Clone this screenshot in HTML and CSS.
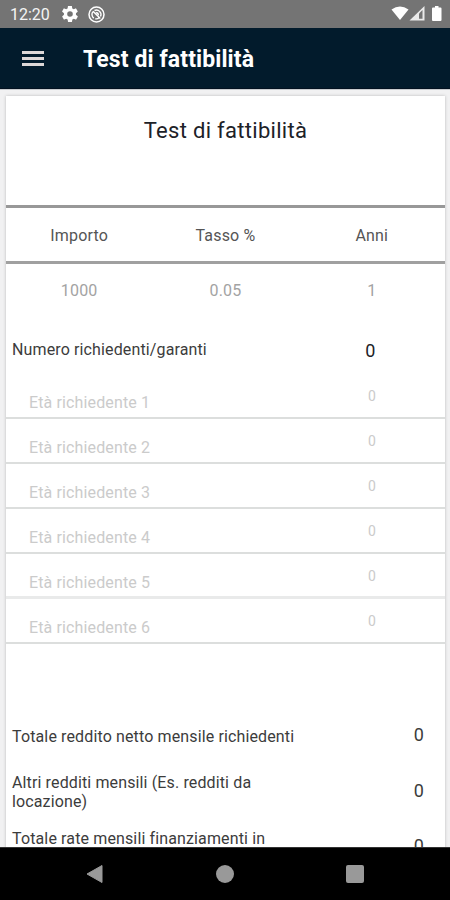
FILE: index.html
```html
<!DOCTYPE html>
<html lang="it">
<head>
<meta charset="utf-8">
<title>Test di fattibilità</title>
<link rel="stylesheet" href="styles.css">
</head>
<body>
<div class="phone">
  <div class="status">
    <span class="clock">12:20</span>
    <svg class="gear" width="16" height="16" viewBox="2 2 20 20" fill="#fff"><path d="M19.4 13c0-.3.1-.6.1-1s0-.7-.1-1l2.1-1.7c.2-.1.2-.4.1-.6l-2-3.500c-.1-.2-.4-.3-.6-.2l-2.500 1c-.5-.4-1.100-.7-1.700-1l-.4-2.600c0-.2-.2-.4-.5-.4h-4c-.2 0-.5.200-.5.400l-.4 2.600c-.6.300-1.200.600-1.700 1l-2.500-1c-.2-.1-.5 0-.6.200l-2 3.500c-.1.200-.1.500.1.600L4.500 11c0 .300-.1.600-.1 1s0 .700.1 1l-2.100 1.700c-.2.100-.2.400-.1.600l2 3.500c.1.200.4.300.6.200l2.500-1c.5.400 1.100.700 1.700 1l.4 2.600c0 .200.200.400.500.400h4c.200 0 .500-.200.500-.400l.4-2.600c.600-.300 1.200-.600 1.700-1l2.500 1c.200.100.500 0 .600-.200l2-3.500c.100-.200.100-.500-.100-.600zM12 15.500a3.500 3.500 0 1 1 0-7 3.500 3.500 0 0 1 0 7z"/></svg>
    <svg width="17" height="17" viewBox="0 0 17 17" fill="none" stroke="#fff"><circle cx="8.500" cy="8.500" r="7.500" stroke-width="1.500"/><path d="M5.800 12.100A4.500 4.500 0 0 1 5 5.600M6.500 4.500a4.500 4.500 0 0 1 6 6M5 5.200l7.300 7.300M7.300 12.800a4.500 4.500 0 0 0 3.800-1" stroke-width="1.400"/><path d="M7.400 6.500a2.300 2.300 0 0 1 3.200 3.200z" fill="#fff" stroke="none"/></svg>
    <svg class="signals" width="53" height="18" viewBox="0 0 53 18" fill="#fff"><path d="M0.500 4.500Q9-1.500 17.500 4.500L9 15z"/><path d="M18.500 15.500L33.500 1v14.500z" opacity=".85"/><path d="M28 8.500l3.500-3.400v8.700H28z" fill="#747474"/><path d="M41 3.500q0-1 1-1h2V1h3.500v1.500h2q1 0 1 1V15q0 1-1 1H42q-1 0-1-1z"/></svg>
  </div>
  <header class="appbar">
    <svg width="22" height="15" viewBox="0 0 22 15" fill="#ddd8d8"><path d="M0 0h22v3H0zM0 6h22v3H0zM0 12h22v3H0z"/></svg>
    <h1>Test di fattibilità</h1>
  </header>
  <main>
    <section class="card">
      <h2>Test di fattibilità</h2>
      <div class="cols head"><span>Importo</span><span>Tasso %</span><span>Anni</span></div>
      <div class="cols values"><span>1000</span><span>0.05</span><span>1</span></div>
      <div class="count"><span>Numero richiedenti/garanti</span><b>0</b></div>
      <div class="ages">
        <div class="age"><span>Età richiedente 1</span><b>0</b></div>
        <div class="age"><span>Età richiedente 2</span><b>0</b></div>
        <div class="age"><span>Età richiedente 3</span><b>0</b></div>
        <div class="age"><span>Età richiedente 4</span><b>0</b></div>
        <div class="age soft"><span>Età richiedente 5</span><b>0</b></div>
        <div class="age"><span>Età richiedente 6</span><b>0</b></div>
      </div>
      <div class="totals">
        <div class="total single"><span>Totale reddito netto mensile richiedenti</span><b>0</b></div>
        <div class="total"><span>Altri redditi mensili (Es. redditi da<br>locazione)</span><b>0</b></div>
        <div class="total"><span>Totale rate mensili finanziamenti in</span><b>0</b></div>
      </div>
    </section>
  </main>
  <nav class="navbar">
    <svg width="17" height="20" viewBox="0 0 17 20"><path d="M16 1.500v17L1 10z" fill="#999" stroke="#999" stroke-linejoin="round"/></svg>
    <i class="home"></i>
    <i class="recent"></i>
  </nav>
</div>
</body>
</html>
```
FILE: styles.css
```css
* { box-sizing: border-box; }
body { margin: 0; font-family: Roboto, "Liberation Sans", sans-serif; font-size: 16px; color: #3c3c3c; }
h1, h2 { margin: 0; }
b { font-weight: 400; }
.phone { width: 450px; height: 900px; display: flex; flex-direction: column; overflow: hidden; }
.status { flex: none; height: 28px; background: #747474; display: flex; align-items: center; padding: 0 6px 0 10px; color: #f4f4f4; }
.clock { width: 52px; font-size: 16px; }
.gear { margin-right: 10px; }
.signals { margin-left: auto; }
.appbar { flex: none; height: 61px; background: #021b2c; display: flex; align-items: center; padding: 1px 22px 0; gap: 39px; border-bottom: 1px solid #021120; }
.appbar h1 { font-size: 23px; font-weight: 700; color: #fff; line-height: 28px; padding-top: 2px; letter-spacing: .1px; }
main { flex: 1; min-height: 0; overflow: hidden; background: #f1f1f2; padding: 6px 5px 0 6px; border-top: 1px solid #c9ccd0; }
.card { height: 800px; background: #fff; box-shadow: 0 0 3px #bbb; }
h2 { height: 109px; padding-top: 21px; line-height: 28px; text-align: center; font-size: 22px; font-weight: 400; color: #1d2228; letter-spacing: .3px; }
.cols { display: grid; grid-template-columns: repeat(3, 1fr); text-align: center; letter-spacing: .2px; }
.head { height: 59px; border-top: 3px solid #989898; border-bottom: 3px solid #a0a0a0; line-height: 56px; color: #555; }
.values { height: 56px; line-height: 54px; color: #a3a3a3; }
.count { height: 54px; display: grid; grid-template-columns: 2fr 1fr; line-height: 60px; padding-left: 6px; letter-spacing: .13px; }
.count b { font-size: 18px; color: #1d2228; text-align: center; padding-right: 5px; line-height: 61px; }
.age { height: 45px; display: grid; grid-template-columns: 2fr 1fr; border-bottom: 2px solid #dcdedd; color: #cbcbcb; line-height: 20px; padding-top: 19px; }
.age span { padding-left: 23px; letter-spacing: .13px; }
.age b { text-align: center; font-size: 14px; line-height: 20px; margin-top: -7px; }
.age.soft { border-bottom: 3px solid #e9eaea; }
.totals { padding: 83px 21px 0 6px; line-height: 18.500px; letter-spacing: .13px; }
.total { display: flex; justify-content: space-between; align-items: center; height: 37px; margin-bottom: 19px; }
.total.single { height: 20px; margin-bottom: 27px; }
.total b { font-size: 18px; margin-top: -3px; }
.total:last-child { align-items: flex-start; }
.total:last-child b { padding-top: 10px; }
.navbar { flex: none; height: 53px; background: #000; display: grid; grid-template-columns: 17px 17px 18px; gap: 113px; align-items: center; padding-left: 86px; border-top: 1px solid #333; }
.home, .recent { background: #999; width: 18px; height: 18px; }
.home { border-radius: 50%; }
.recent { border-radius: 2px; }
```
